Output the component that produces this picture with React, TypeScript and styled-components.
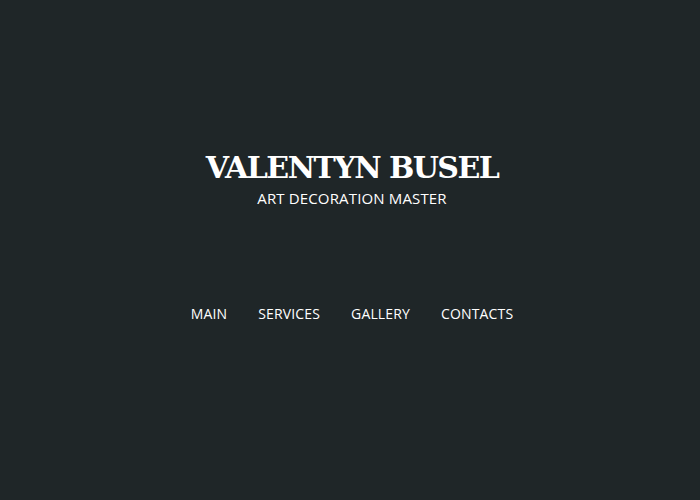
import React from "react";
import styled, { createGlobalStyle } from "styled-components";

const Global = createGlobalStyle`
  html, body { margin: 0; padding: 0; background: #1f2628; }
  body { font-family: "Open Sans", sans-serif; }
`;

const Page = styled.div`
  width: 700px;
  height: 500px;
  background: #1f2628;
  display: flex;
  flex-direction: column;
  align-items: center;
  padding: 148px 0 0 4px;
  box-sizing: border-box;
`;

const Title = styled.h1`
  margin: 0;
  font-family: "DejaVu Serif", serif;
  font-weight: bold;
  font-size: 30px;
  letter-spacing: -1.55px;
  line-height: 40px;
  color: #ffffff;
`;

const Subtitle = styled.div`
  font-family: "Open Sans", sans-serif;
  font-size: 15px;
  letter-spacing: 0.15px;
  line-height: 20px;
  color: #ffffff;
`;

const Nav = styled.nav`
  display: flex;
  gap: 31px;
  margin-top: 96px;
`;

const NavLink = styled.a`
  font-family: "Open Sans", sans-serif;
  font-size: 14px;
  letter-spacing: 0.15px;
  line-height: 20px;
  color: #ffffff;
  text-decoration: none;
`;

export default function App() {
  return (
    <>
      <Global />
      <Page>
        <Title>VALENTYN BUSEL</Title>
        <Subtitle>ART DECORATION MASTER</Subtitle>
        <Nav>
          {["MAIN", "SERVICES", "GALLERY", "CONTACTS"].map((l) => (
            <NavLink key={l} href="#">{l}</NavLink>
          ))}
        </Nav>
      </Page>
    </>
  );
}
